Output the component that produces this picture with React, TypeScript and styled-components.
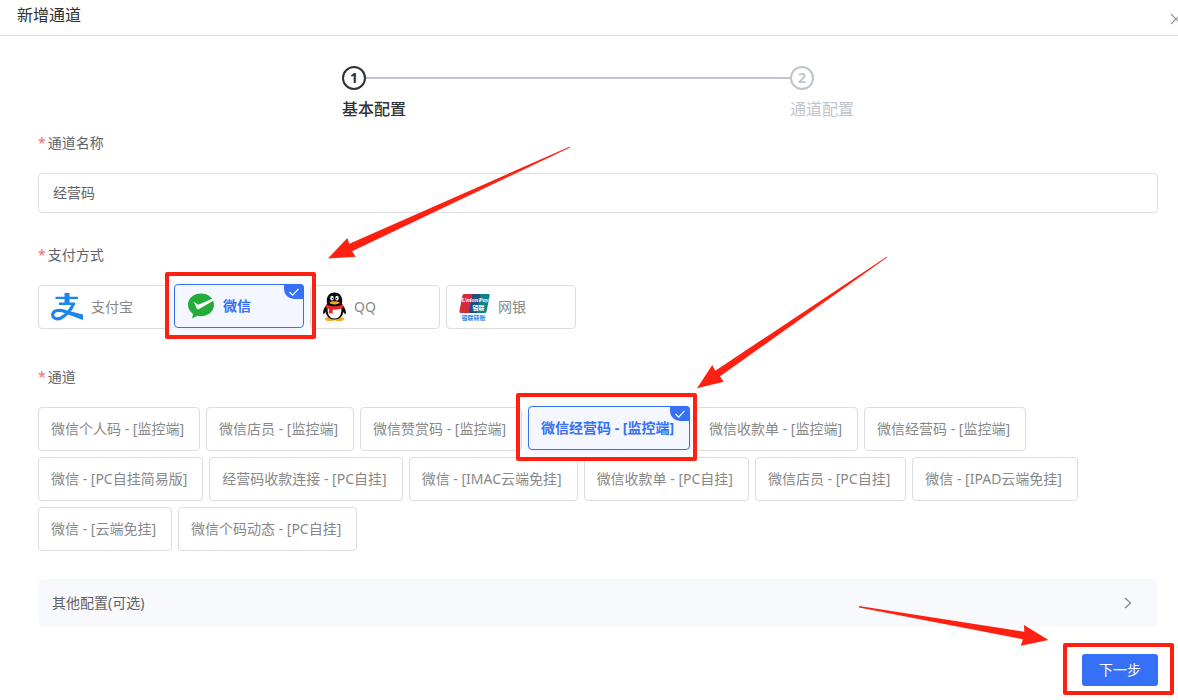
import React, { useState } from 'react';
import styled, { createGlobalStyle, css } from 'styled-components';

const GlobalStyle = createGlobalStyle`
  *, *::before, *::after { box-sizing: border-box; }
  body {
    margin: 0;
    background: #fff;
    color: #606266;
    font: 14px/20px 'Noto Sans', 'Noto Sans CJK SC', sans-serif;
    overflow-x: hidden;
  }
  button, input { font: inherit; color: inherit; }
`;

const Dialog = styled.main`
  position: relative;
  min-height: 100vh;
  overflow: hidden;
`;

const Header = styled.header`
  display: flex;
  align-items: center;
  justify-content: space-between;
  height: 36px;
  padding-left: 17px;
  border-bottom: 1px solid #dfe0e2;
`;

const Title = styled.h1`
  margin: 0;
  padding-bottom: 6px;
  font-size: 16px;
  line-height: 24px;
  font-weight: 400;
  color: #303133;
`;

const CloseButton = styled.button`
  display: flex;
  margin-right: -4px;
  padding: 2px 0 0;
  border: 0;
  background: none;
  color: #909399;
`;

const Body = styled.form`
  padding: 30px 20px 14px 38px;
`;

const Steps = styled.ol`
  display: flex;
  max-width: 512px;
  margin: 0 auto 11px;
  padding: 0;
  list-style: none;
`;

const Step = styled.li<{ $active?: boolean; $last?: boolean }>`
  flex: ${(p) => (p.$last ? '0 0 64px' : '1')};
  color: ${(p) => (p.$active ? '#303133' : '#c0c4cc')};
  font-size: 16px;
  line-height: 22px;
  font-weight: ${(p) => (p.$active ? 500 : 400)};
`;

const StepHead = styled.div`
  display: flex;
  align-items: center;
  margin-bottom: 8px;
`;

const StepNumber = styled.span`
  flex: none;
  width: 24px;
  height: 24px;
  border: 2px solid currentColor;
  border-radius: 50%;
  text-align: center;
  font-size: 14px;
  line-height: 20px;
  font-weight: 700;
`;

const StepLine = styled.span`
  flex: 1;
  height: 2px;
  background: #c0c4cc;
`;

const Field = styled.fieldset<{ $gap: number }>`
  min-width: 0;
  margin: 0 0 ${(p) => p.$gap}px;
  padding: 0;
  border: 0;
`;

const labelStyle = css`
  display: block;
  padding: 0;
  margin-bottom: 18px;
  line-height: 24px;

  &::before {
    content: '*';
    margin-right: 2px;
    color: #f56c6c;
  }
`;

const Label = styled.label`${labelStyle}`;
const Legend = styled.legend`${labelStyle}`;

const TextInput = styled.input`
  display: block;
  width: 100%;
  height: 40px;
  padding: 0 14px 2px;
  border: 1px solid #dcdfe6;
  border-radius: 4px;
  background: #fff;
  outline: none;
`;

const Options = styled.div`
  display: flex;
  flex-wrap: wrap;
  gap: 6px;
`;

const Option = styled.label<{ $checked: boolean; $wide?: boolean }>`
  position: relative;
  display: flex;
  align-items: center;
  gap: 8px;
  height: 44px;
  min-width: ${(p) => (p.$wide ? '130px' : '0')};
  padding: ${(p) => (p.$wide ? '0 12px' : '0 15px 0 12px')};
  border: 1px solid #dcdcdc;
  border-radius: 4px;
  color: #888;
  white-space: nowrap;
  cursor: pointer;

  ${(p) =>
    p.$checked &&
    css`
      z-index: 1;
      transform: translateY(-1px);
      border-color: #3670f7;
      background: #f4f7ff;
      box-shadow: 0 2px 12px rgba(54, 112, 247, 0.14);
      color: #3670f7;
      font-weight: 700;
    `}
`;

const HiddenRadio = styled.input`
  position: absolute;
  inset: 0;
  margin: 0;
  opacity: 0;
`;

const Corner = styled.span`
  position: absolute;
  top: -1px;
  right: -1px;
  display: flex;
  align-items: center;
  justify-content: center;
  width: 20px;
  height: 15px;
  border-radius: 0 4px 0 10px;
  background: #3670f7;
`;

const Highlight = styled.span<{ $inset: string }>`
  position: absolute;
  z-index: 2;
  inset: ${(p) => p.$inset};
  border: 4px solid #ff2012;
  border-radius: 2px;
  pointer-events: none;
`;

const MoreConfig = styled.button`
  display: flex;
  align-items: center;
  justify-content: space-between;
  width: 100%;
  height: 48px;
  padding: 0 24px 0 14px;
  border: 0;
  border-radius: 6px;
  background: #f8f9fd;
`;

const Footer = styled.footer`
  display: flex;
  justify-content: flex-end;
  margin-top: 27px;
`;

const NextWrap = styled.div`
  position: relative;
`;

const NextButton = styled.button`
  display: block;
  width: 76px;
  height: 32px;
  padding: 0;
  border: 0;
  border-radius: 3px;
  background: #3670f7;
  color: #fff;
`;

const Arrows = styled.svg`
  position: absolute;
  top: 0;
  left: 0;
  z-index: 3;
  pointer-events: none;
`;

const AlipayIcon = () => (
  <svg width="32" height="28" viewBox="0 0 32 28" aria-hidden="true">
    <g fill="none" stroke="#1b87ee">
      <path d="M4.500 4.900H27M8 10.800H24" strokeWidth="2.400" />
      <path d="M16 0V11" strokeWidth="5" />
      <path d="M22.500 10.500C20.500 16.500 15 22.500 10 25C5.500 27.200 1.500 25 1.700 21.500C2 17 8.500 16.400 14 18.400L31.500 24.800" strokeWidth="3.200" />
    </g>
    <path d="M18 18L32 21.500V27L15 20.500Z" fill="#1b87ee" />
  </svg>
);

const WechatPayIcon = () => (
  <svg width="28" height="26" viewBox="-1 0 28 26" aria-hidden="true">
    <path d="M13 0.500C5.800 0.500 0 5.300 0 11.800C0 15.600 2 18.800 5 20.900L4.200 25.500L9.500 22.800C10.600 23.100 11.800 23.200 13 23.200C20.200 23.200 26 18.300 26 11.800C26 5.300 20.200 0.500 13 0.500Z" fill="#25ab38" />
    <path d="M5.600 8.800L10.300 11.800L25.200 5.200L25.800 7.500L10.600 16.200C9.800 16.600 9.200 16.300 8.800 15.600Z" fill="#fff" />
  </svg>
);

const QQIcon = () => (
  <svg width="23" height="30" viewBox="0.500 0 23 30" aria-hidden="true">
    <ellipse cx="7.500" cy="27" rx="5" ry="2" fill="#f8a91b" />
    <ellipse cx="16.500" cy="27" rx="5" ry="2" fill="#f8a91b" />
    <path d="M12 0.500C7.200 0.500 4.200 4 4.300 8.500L4.500 12C2.500 14.500 0.400 18 0.600 21C0.800 23.200 2.500 21 3.200 20C3.800 24.500 7 27.500 12 27.500C17 27.500 20.200 24.500 20.800 20C21.500 21 23.200 23.200 23.400 21C23.600 18 21.500 14.500 19.500 12L19.700 8.500C19.800 4 16.800 0.500 12 0.500Z" fill="#0b0b0d" />
    <path d="M5.300 15.500C4.500 21.500 6.500 26.500 12 26.500C17.500 26.500 19.500 21.500 18.700 15.500Z" fill="#fff" />
    <ellipse cx="9.500" cy="6.200" rx="1.700" ry="2.400" fill="#fff" />
    <ellipse cx="14.500" cy="6.200" rx="1.700" ry="2.400" fill="#fff" />
    <circle cx="10" cy="6.500" r="0.800" />
    <circle cx="14" cy="6.500" r="0.800" />
    <path d="M6.800 10.700C9 8.900 15 8.900 17.200 10.700C15 13 9 13 6.800 10.700Z" fill="#f8a91b" />
    <path d="M3.800 12.200C8 15 16 15 20.200 12.200L21 15.500C17.500 17.600 13.500 18 10.200 17.600V21.500L6.200 21.200L6.500 16.900L3 15.500Z" fill="#e8272b" />
  </svg>
);

const UnionPayIcon = () => (
  <svg width="31" height="28" viewBox="0.500 0 31 28" aria-hidden="true">
    <path d="M5.500 1H15L11 20H2.200Q0.500 20 0.900 18L4 2.500Q4.300 1 5.500 1Z" fill="#d42b3a" />
    <path d="M14 1H23L19 20H10Z" fill="#1f4e83" />
    <path d="M22 1H30.200Q31.500 1 31.200 2.500L28 18.500Q27.700 20 26.200 20H18Z" fill="#07848a" />
    <text x="3" y="8.500" fill="#fff" fontFamily="Liberation Serif, serif" fontSize="6.500" fontWeight="700" fontStyle="italic">UnionPay</text>
    <text x="14" y="17" fill="#fff" fontFamily="Noto Sans CJK SC, sans-serif" fontSize="6" fontWeight="700">银联</text>
    <text x="3" y="26.500" fill="#2388ec" fontFamily="Noto Sans CJK SC, sans-serif" fontSize="6" fontWeight="700">银联转账</text>
  </svg>
);

const CheckCorner = () => (
  <Corner>
    <svg width="12" height="10" viewBox="0 0 12 10" aria-hidden="true">
      <path d="M1.500 5L4.700 8.200L10.500 1.800" fill="none" stroke="#fff" strokeWidth="1.200" />
    </svg>
  </Corner>
);

const payments = [
  { name: '支付宝', Icon: AlipayIcon },
  { name: '微信', Icon: WechatPayIcon },
  { name: 'QQ', Icon: QQIcon },
  { name: '网银', Icon: UnionPayIcon },
];

const channels = [
  '微信个人码 - [监控端]',
  '微信店员 - [监控端]',
  '微信赞赏码 - [监控端]',
  '微信经营码 - [监控端]',
  '微信收款单 - [监控端]',
  '微信经营码 - [监控端]',
  '微信 - [PC自挂简易版]',
  '经营码收款连接 - [PC自挂]',
  '微信 - [IMAC云端免挂]',
  '微信收款单 - [PC自挂]',
  '微信店员 - [PC自挂]',
  '微信 - [IPAD云端免挂]',
  '微信 - [云端免挂]',
  '微信个码动态 - [PC自挂]',
];

export default function App() {
  const [name, setName] = useState('经营码');
  const [payment, setPayment] = useState(1);
  const [channel, setChannel] = useState(3);

  return (
    <Dialog>
      <GlobalStyle />
      <Header>
        <Title>新增通道</Title>
        <CloseButton type="button" aria-label="关闭">
          <svg width="12" height="12" viewBox="0 0 12 12" aria-hidden="true">
            <path d="M1 1L11 11M11 1L1 11" fill="none" stroke="currentColor" strokeWidth="1.200" />
          </svg>
        </CloseButton>
      </Header>
      <Body onSubmit={(e) => e.preventDefault()}>
        <Steps>
          <Step $active>
            <StepHead>
              <StepNumber>1</StepNumber>
              <StepLine />
            </StepHead>
            基本配置
          </Step>
          <Step $last>
            <StepHead>
              <StepNumber>2</StepNumber>
            </StepHead>
            通道配置
          </Step>
        </Steps>
        <Field $gap={30}>
          <Label htmlFor="channel-name">通道名称</Label>
          <TextInput id="channel-name" value={name} onChange={(e) => setName(e.target.value)} />
        </Field>
        <Field $gap={36}>
          <Legend>支付方式</Legend>
          <Options>
            {payments.map(({ name: label, Icon }, i) => (
              <Option key={label} $checked={payment === i} $wide>
                <HiddenRadio type="radio" name="payment" checked={payment === i} onChange={() => setPayment(i)} />
                <Icon />
                {label}
                {payment === i && <CheckCorner />}
                {i === 1 && <Highlight $inset="-13px -13px -12px -10px" />}
              </Option>
            ))}
          </Options>
        </Field>
        <Field $gap={28}>
          <Legend>通道</Legend>
          <Options>
            {channels.map((label, i) => (
              <Option key={i} $checked={channel === i}>
                <HiddenRadio type="radio" name="channel" checked={channel === i} onChange={() => setChannel(i)} />
                {label}
                {channel === i && <CheckCorner />}
                {i === 3 && <Highlight $inset="-14px -8px -12px -13px" />}
              </Option>
            ))}
          </Options>
        </Field>
        <MoreConfig type="button">
          其他配置(可选)
          <svg width="12" height="12" viewBox="0 0 12 12" aria-hidden="true">
            <path d="M3 1L8.500 6L3 11" fill="none" stroke="#808388" strokeWidth="1.200" />
          </svg>
        </MoreConfig>
        <Footer>
          <NextWrap>
            <NextButton type="submit">下一步</NextButton>
            <Highlight $inset="-11px -16px -9px -19px" />
          </NextWrap>
        </Footer>
      </Body>
      <Arrows width="1178" height="700" viewBox="0 0 1178 700" fill="#ff2012" aria-hidden="true">
        <path d="M570 146.500L349.300 243.700L347.300 238L328 258.500L355.700 256.700L352 251.300L570 147.500Z" />
        <path d="M887 256.500L715.300 370.700L712.300 365L697 388.200L723.700 381.700L720 376.300L887 257.500Z" />
        <path d="M859 606L1024.300 631.700L1024 625L1048.500 640L1020.700 645.700L1023 639.300L859 607.500Z" />
      </Arrows>
    </Dialog>
  );
}
